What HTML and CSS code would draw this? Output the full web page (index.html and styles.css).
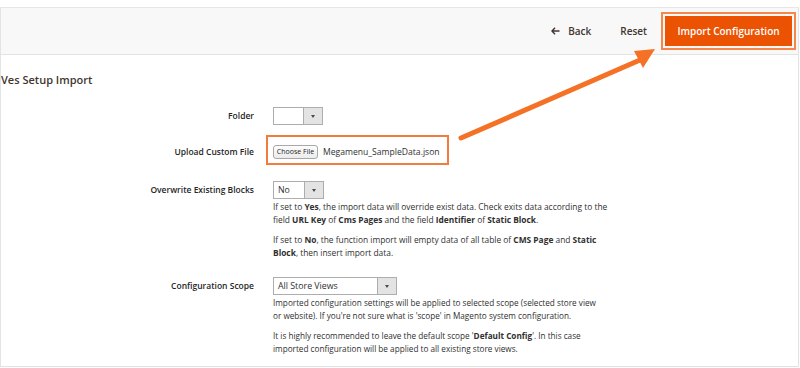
FILE: index.html
```html
<!DOCTYPE html>
<html lang="en">

<head>
    <meta charset="UTF-8">
    <title>Ves Setup Import</title>
    <link rel="stylesheet" href="styles.css">
</head>

<body>
    <div class="frame">
        <div class="page-actions">
            <span class="action back">
                <svg width="9" height="8" viewBox="0 0 9 8"><path d="M4 0.8 L1 4 L4 7.2 M1 4 H8.5" fill="none" stroke="#41362f" stroke-width="1.4"/></svg>
                Back
            </span>
            <span class="action reset">Reset</span>
            <span class="focus-ring"><span class="btn-primary">Import Configuration</span></span>
        </div>

        <div class="content">
            <h2 class="section-title">Ves Setup Import</h2>

            <div class="field field-folder">
                <label>Folder</label>
                <div class="select" style="width:50px"><span class="select-value"></span><span class="select-toggle"></span></div>
            </div>

            <div class="field field-upload">
                <label>Upload Custom File</label>
                <div class="file-box">
                    <span class="file-btn">Choose File</span>
                    <span class="file-name">Megamenu_SampleData.json</span>
                </div>
            </div>

            <div class="field field-overwrite">
                <label>Overwrite Existing Blocks</label>
                <div class="control">
                    <div class="select" style="width:51px"><span class="select-value">No</span><span class="select-toggle"></span></div>
                    <div class="note">
                        <p>If set to <b>Yes</b>, the import data will override exist data. Check exits data according to the<br>field <b>URL Key</b> of <b>Cms Pages</b> and the field <b>Identifier</b> of <b>Static Block</b>.</p>
                        <p>If set to <b>No</b>, the function import will empty data of all table of <b>CMS Page</b> and <b>Static</b><br><b>Block</b>, then insert import data.</p>
                    </div>
                </div>
            </div>

            <div class="field field-scope">
                <label>Configuration Scope</label>
                <div class="control">
                    <div class="select" style="width:124px"><span class="select-value">All Store Views</span><span class="select-toggle"></span></div>
                    <div class="note note-scope">
                        <p>Imported configuration settings will be applied to selected scope (selected store view<br>or website). If you're not sure what is 'scope' in Magento system configuration.</p>
                        <p>It is highly recommended to leave the default scope '<b>Default Config</b>'. In this case<br>imported configuration will be applied to all existing store views.</p>
                    </div>
                </div>
            </div>
        </div>

        <!-- annotation arrow -->
        <svg class="arrow" width="800" height="368" viewBox="0 0 800 368">
            <line x1="461" y1="138" x2="640" y2="60" stroke="#f47126" stroke-width="5" stroke-linecap="round"/>
            <polygon points="634,51 655,49 643,68" fill="#f47126"/>
        </svg>
    </div>
</body>

</html>
```
FILE: styles.css
```css
* {
    margin: 0;
    padding: 0;
    box-sizing: border-box;
}

body {
    font-family: "Open Sans", "Liberation Sans", sans-serif;
    color: #303030;
    background: #fff;
}

.frame {
    width: 799px;
    height: 360px;
    margin-top: 7px;
    border: 1px solid #e3e3e3;
    border-top-color: #e6e6e6;
    position: relative;
    overflow: hidden;
}

.page-actions {
    height: 47px;
    background: #f8f8f8;
    border-bottom: 1px solid #e3e3e3;
    display: flex;
    align-items: center;
    justify-content: flex-end;
    padding-right: 2px;
}

.action {
    font-size: 10px;
    font-weight: 600;
    color: #41362f;
    display: flex;
    align-items: center;
}

.back svg {
    margin-right: 8px;
}

.reset {
    margin-left: 29px;
    margin-right: 14px;
}

.focus-ring {
    border: 2px solid #f6864a;
    padding: 2px;
    display: block;
}

.btn-primary {
    display: block;
    width: 127px;
    height: 30px;
    line-height: 30px;
    text-align: center;
    background: #eb5202;
    color: #fff;
    font-size: 10px;
    font-weight: 600;
}

.content {
    padding-top: 18px;
}

.section-title {
    font-size: 11px;
    font-weight: 600;
    line-height: 14px;
    color: #41362f;
    margin-bottom: 20px;
}

.field {
    display: grid;
    grid-template-columns: 253px auto;
    column-gap: 19px;
    align-items: start;
}

.field label {
    text-align: right;
    font-size: 8.5px;
    font-weight: 600;
    line-height: 18px;
    color: #262626;
}

.field-upload {
    margin-top: 10px;
    column-gap: 12px;
}

.field-upload label {
    padding-top: 8px;
}

.field-overwrite {
    margin-top: 16px;
}

.field-scope {
    margin-top: 18px;
}

.select {
    height: 18px;
    border: 1px solid #adadad;
    background: #fff;
    display: flex;
}

.select-value {
    flex: 1;
    font-size: 8.8px;
    line-height: 16px;
    padding-left: 4px;
    color: #303030;
}

.select-toggle {
    width: 19px;
    background: #e3e3e3;
    border-left: 1px solid #adadad;
    position: relative;
}

.select-toggle::after {
    content: "";
    position: absolute;
    left: 7px;
    top: 7px;
    border-left: 2.5px solid transparent;
    border-right: 2.5px solid transparent;
    border-top: 3px solid #514943;
}

.file-box {
    width: 183px;
    height: 30px;
    border: 2px solid #f47b3e;
    padding: 8px 5px 4px;
    display: flex;
    align-items: center;
}

.file-btn {
    width: 45px;
    height: 14px;
    border: 1px solid #a8a8a8;
    border-radius: 3px;
    background: linear-gradient(#fdfdfd, #ececec);
    font-size: 7px;
    line-height: 12px;
    text-align: center;
    color: #222;
}

.file-name {
    margin-left: 5px;
    font-size: 8.6px;
    color: #303030;
}

.note {
    font-size: 8.4px;
    line-height: 13px;
    padding-top: 1px;
    white-space: nowrap;
}

.note-scope {
    font-size: 8.2px;
}

.note p + p {
    margin-top: 7px;
}

.note b {
    font-weight: 700;
}

.arrow {
    position: absolute;
    left: -1px;
    top: -8px;
    pointer-events: none;
}
```
